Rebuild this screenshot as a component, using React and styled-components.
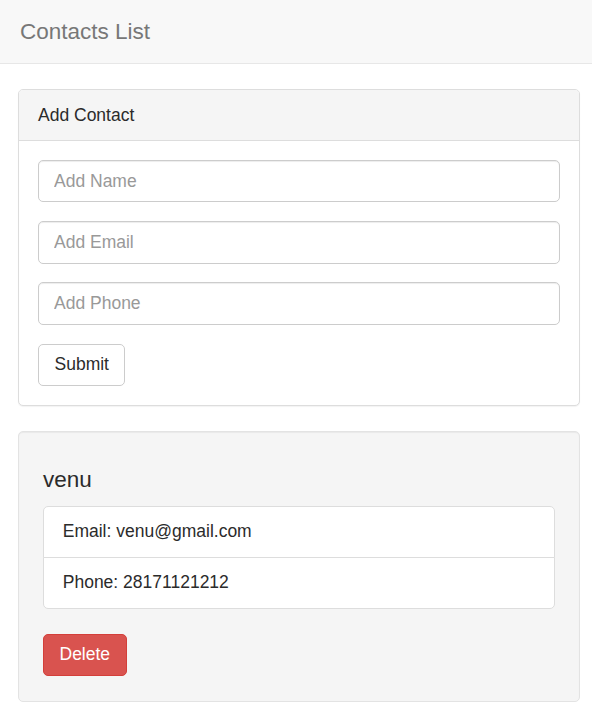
import React from 'react';
import styled, { createGlobalStyle } from 'styled-components';

const GlobalStyle = createGlobalStyle`
  * { box-sizing: border-box; }
  body {
    margin: 0;
    background: #fff;
    font-family: "Liberation Sans", Arial, sans-serif;
    font-size: 17.5px;
    line-height: 1.42857;
    color: #2b2b2b;
  }
`;

const Navbar = styled.nav`
  height: 64px;
  background: #f8f8f8;
  border-bottom: 1px solid #e7e7e7;
  margin-bottom: 25px;
  display: flex;
  align-items: center;
  padding: 0 20px;
`;

const Brand = styled.div`
  font-size: 22.5px;
  line-height: 25px;
  color: #777;
`;

const Container = styled.div`
  padding: 0 12px 0 18px;
`;

const Panel = styled.div`
  background: #fff;
  border: 1px solid #ddd;
  border-radius: 5px;
  box-shadow: 0 1px 1px rgba(0, 0, 0, 0.05);
  margin-bottom: 25px;
`;

const PanelHeading = styled.div`
  background: #f5f5f5;
  border-bottom: 1px solid #ddd;
  border-radius: 4px 4px 0 0;
  padding: 12.5px 19px;
  line-height: 25px;
`;

const PanelBody = styled.div`
  padding: 18.75px 19px;
`;

const FormGroup = styled.div`
  margin-bottom: 18.75px;
`;

const Input = styled.input`
  display: block;
  width: 100%;
  height: 42.5px;
  padding: 7.5px 15px;
  font-family: inherit;
  font-size: 17.5px;
  color: #555;
  background: #fff;
  border: 1px solid #ccc;
  border-radius: 5px;
  box-shadow: inset 0 1px 1px rgba(0, 0, 0, 0.075);
  outline: none;

  &::placeholder {
    color: #999;
  }
`;

const Button = styled.button`
  display: inline-block;
  height: 42.5px;
  padding: 7.5px 15.5px;
  font-family: inherit;
  font-size: 17.5px;
  line-height: 25px;
  border-radius: 5px;
  border: 1px solid ${(p) => (p.$danger ? '#d43f3a' : '#ccc')};
  background: ${(p) => (p.$danger ? '#d9534f' : '#fff')};
  color: ${(p) => (p.$danger ? '#fff' : '#2b2b2b')};
  cursor: pointer;
`;

const Well = styled.div`
  background: #f5f5f5;
  border: 1px solid #e3e3e3;
  border-radius: 5px;
  box-shadow: inset 0 1px 1px rgba(0, 0, 0, 0.05);
  padding: 24px 24px 24.5px;
  margin-bottom: 25px;
`;

const Name = styled.h4`
  margin: 12.5px 0;
  font-size: 22.5px;
  font-weight: 500;
  line-height: 1.1;
`;

const ListGroup = styled.ul`
  list-style: none;
  margin: 0 0 25px;
  padding: 0;
`;

const ListItem = styled.li`
  background: #fff;
  border: 1px solid #ddd;
  padding: 12.5px 18.75px;
  line-height: 25px;
  margin-bottom: -1px;

  &:first-child {
    border-radius: 5px 5px 0 0;
  }
  &:last-child {
    border-radius: 0 0 5px 5px;
    margin-bottom: 0;
  }
`;

const contacts = [
  { name: 'venu', email: 'venu@gmail.com', phone: '28171121212' },
];

export default function App() {
  return (
    <>
      <GlobalStyle />
      <Navbar>
        <Brand>Contacts List</Brand>
      </Navbar>
      <Container>
        <Panel>
          <PanelHeading>Add Contact</PanelHeading>
          <PanelBody>
            <FormGroup>
              <Input placeholder="Add Name" />
            </FormGroup>
            <FormGroup>
              <Input placeholder="Add Email" />
            </FormGroup>
            <FormGroup>
              <Input placeholder="Add Phone" />
            </FormGroup>
            <Button>Submit</Button>
          </PanelBody>
        </Panel>
        {contacts.map((c) => (
          <Well key={c.email}>
            <Name>{c.name}</Name>
            <ListGroup>
              <ListItem>Email: {c.email}</ListItem>
              <ListItem>Phone: {c.phone}</ListItem>
            </ListGroup>
            <Button $danger>Delete</Button>
          </Well>
        ))}
      </Container>
    </>
  );
}
